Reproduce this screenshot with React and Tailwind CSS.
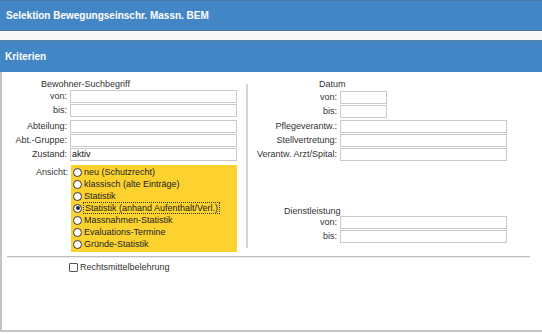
import React from "react";

const Field = ({ label, w = "w-[167px]", value = "", lw = "w-[68px]" }) => (
  <div className="flex h-[14px] items-start">
    <div className={`${lw} shrink-0 pr-[3px] text-right leading-[13px]`}>{label}</div>
    <div className={`${w} h-[13px] border border-[#c9c9c9] bg-white pl-[1px] leading-[11px] text-[#111]`}>{value}</div>
  </div>
);

const options = [
  "neu (Schutzrecht)",
  "klassisch (alte Einträge)",
  "Statistik",
  "Statistik (anhand Aufenthalt/Verl.)",
  "Massnahmen-Statistik",
  "Evaluations-Termine",
  "Gründe-Statistik",
];

const Radio = ({ label, checked }) => (
  <div className="flex h-[12px] items-center">
    <span className="flex h-[9px] w-[9px] shrink-0 items-center justify-center rounded-full border border-[#333] bg-white">
      {checked && <span className="h-[4px] w-[4px] rounded-full bg-[#1a2a4a]" />}
    </span>
    <span
      className={
        checked
          ? "ml-[1px] border border-dotted border-[#333] px-[1px] leading-[10px]"
          : "ml-[2px] leading-[10px]"
      }
    >
      {label}
    </span>
  </div>
);

export default function App() {
  return (
    <div className="h-[334px] w-[542px] overflow-hidden bg-white text-[9px] text-[#333] [font-family:'Liberation_Sans',Arial,sans-serif]">
      <div className="flex h-[31px] items-center border-t border-b border-[#4f77a0] bg-[#4386c6] px-[6px] text-[10px] font-bold text-white">
        Selektion Bewegungseinschr. Massn. BEM
      </div>
      <div className="h-[9px] bg-[#f8f8f8]" />
      <div className="flex h-[32px] items-center border-t border-[#5b7ea3] bg-[#4386c6] px-[5px] text-[10px] font-bold text-white">
        Kriterien
      </div>

      <div className="h-[260px] border-b-2 border-l-2 border-[#c4c4c4]">
        <div className="flex">
          <div className="w-[244px] pt-[7px]">
            <div className="h-[11px] pl-[39px] leading-[11px]">Bewohner-Suchbegriff</div>
            <Field label="von:" />
            <Field label="bis:" />
            <div className="mt-[2px]">
              <Field label="Abteilung:" />
              <Field label="Abt.-Gruppe:" />
              <Field label="Zustand:" value="aktiv" />
            </div>
            <div className="mt-[3px] flex">
              <div className="w-[69px] shrink-0 pr-[3px] pt-[1px] text-right leading-[12px]">Ansicht:</div>
              <div className="h-[87px] w-[166px] bg-[#fdd22f] pl-[2px] pt-[1px] text-[#222]">
                {options.map((o, i) => (
                  <Radio key={o} label={o} checked={i === 3} />
                ))}
              </div>
            </div>
          </div>

          <div className="mt-[12px] h-[164px] w-[2px] bg-[#d2d2d2]" />

          <div className="flex-1 pt-[7px]">
            <div className="h-[12px] pl-[71px] leading-[11px]">Datum</div>
            <Field label="von:" lw="w-[92px]" w="w-[47px]" />
            <Field label="bis:" lw="w-[92px]" w="w-[47px]" />
            <div className="mt-[1px]">
              <Field label="Pflegeverantw.:" lw="w-[92px]" />
              <Field label="Stellvertretung:" lw="w-[92px]" />
              <Field label="Verantw. Arzt/Spital:" lw="w-[92px]" />
            </div>
            <div className="mt-[44px] h-[10px] pl-[36px] leading-[10px]">Dienstleistung</div>
            <Field label="von:" lw="w-[92px]" />
            <Field label="bis:" lw="w-[92px]" />
          </div>
        </div>

        <div className="ml-[5px] mt-[4px] h-[2px] w-[523px] border-t border-[#bdbdbd] bg-[#ececec]" />

        <div className="ml-[67px] mt-[4px] flex items-center">
          <span className="h-[9px] w-[9px] rounded-[1px] border border-[#555] bg-white" />
          <span className="ml-[2px] leading-[10px]">Rechtsmittelbelehrung</span>
        </div>
      </div>
    </div>
  );
}
